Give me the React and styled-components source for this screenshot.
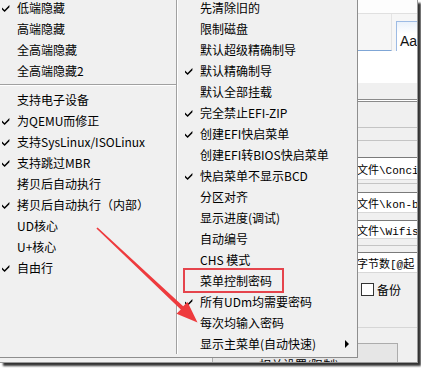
import React from 'react';
import styled, { createGlobalStyle } from 'styled-components';

const Global = createGlobalStyle`
  html, body { margin: 0; padding: 0; background: #fff; }
  body { width: 421px; height: 368px; overflow: hidden; }
`;

const Frame = styled.div`
  position: relative;
  box-sizing: border-box;
  width: 418px;
  height: 363px;
  background: #f0f0f0;
  border-right: 1px solid #9a9a9a;
  border-bottom: 1px solid #9a9a9a;
  box-shadow: 3px 3px 2px rgba(0, 0, 0, 0.8);
  overflow: hidden;
  font-family: "Noto Sans CJK SC", "Noto Sans", sans-serif;
`;

/* ---------- window behind the menu ---------- */

const Window = styled.div`
  display: flex;
  flex-direction: column;
  height: 100%;
`;

const MainArea = styled.div`
  display: flex;
  height: 343px;
`;

const Spacer = styled.div`
  flex: 1;
`;

const SidePanel = styled.div`
  width: 60px;
  display: flex;
  flex-direction: column;
  overflow: hidden;
`;

const Block = styled.div`
  height: ${p => p.$h}px;
  background: ${p => p.$bg || '#f0f0f0'};
  flex-shrink: 0;
`;

const Rule = styled.div`
  height: 1px;
  flex-shrink: 0;
  background: ${p => p.$c || '#a0a0a0'};
`;

const Ribbon = styled.div`
  height: 37px;
  display: flex;
  align-items: flex-end;
  background: #f6f6f6;
`;

const RibbonFill = styled.div`
  flex: 1;
  height: 100%;
  box-sizing: border-box;
  border-bottom: 1px solid #7fa6d6;
  border-right: 1px solid #e4e4e4;
  margin-right: 4px;
`;

const AaTab = styled.div`
  width: 21px;
  height: 30px;
  box-sizing: border-box;
  border: 1px solid #9dbbe4;
  border-bottom: none;
  border-right: none;
  background: linear-gradient(#e9f1fb, #ffffff 40%);
  font-family: "Liberation Sans", sans-serif;
  font-size: 14px;
  line-height: 14px;
  padding: 12px 0 0 3px;
  white-space: nowrap;
  color: #111;
`;

const Field = styled.div`
  height: ${p => p.$h}px;
  box-sizing: border-box;
  flex-shrink: 0;
  background: #fff;
  border-top: 1px solid #7a7a7a;
  border-bottom: 1px solid #d8d8d8;
  display: flex;
  align-items: center;
  white-space: nowrap;
  font-family: "Liberation Mono", "Noto Sans CJK SC", monospace;
  font-size: 11px;
  color: #000;
`;

const CheckRow = styled.div`
  height: 15px;
  flex-shrink: 0;
  display: flex;
  align-items: center;
  gap: 3px;
  padding-left: 4px;
  font-size: 12px;
  color: #000;
  white-space: nowrap;
`;

const Box = styled.span`
  width: 11px;
  height: 11px;
  border: 1px solid #333;
  background: #fff;
`;

const BottomRow = styled.div`
  display: flex;
  padding-left: 212px;
`;

const Button = styled.div`
  width: 186px;
  height: 30px;
  box-sizing: border-box;
  border: 1px solid #acacac;
  background: #e6e6e6;
  font-size: 12px;
  line-height: 12px;
  padding: 15px 0 0 46px;
  color: #000;
  white-space: nowrap;
`;

/* ---------- popup menu ---------- */

const Menu = styled.div`
  position: absolute;
  left: -5px;
  top: -3px;
  display: flex;
  background: #f0f0f0;
  border-right: 1px solid #8e8e8e;
  border-bottom: 1px solid #8e8e8e;
  font-size: 12px;
  color: #000;
`;

const Column = styled.div`
  width: ${p => p.$w}px;
  display: flex;
  flex-direction: column;
  ${p => p.$break ? `
    align-self: stretch;
    margin-bottom: 3px;
    border-right: 1px solid #a0a0a0;
    box-shadow: 1px 0 0 #ffffff;
  ` : `
    padding-bottom: 3px;
    margin-left: 1px;
  `}
`;

const Item = styled.div`
  height: 21px;
  display: flex;
  align-items: center;
  white-space: nowrap;
  position: relative;
`;

const Gutter = styled.span`
  width: ${p => p.$w}px;
  flex-shrink: 0;
  display: flex;
  align-items: center;
  padding-left: ${p => p.$pad}px;
  box-sizing: border-box;
`;

const Label = styled.span`
  flex: 1;
  line-height: 21px;
`;

const SubArrow = styled.span`
  width: 0;
  height: 0;
  border-left: 4px solid #000;
  border-top: 4px solid transparent;
  border-bottom: 4px solid transparent;
  margin-right: 8px;
`;

const Separator = styled.div`
  height: 8px;
  display: flex;
  flex-direction: column;
  justify-content: center;
  padding-left: 3px;
  &::before { content: ''; height: 1px; background: #a0a0a0; }
  &::after { content: ''; height: 1px; background: #ffffff; }
`;

/* ---------- annotations ---------- */

const Highlight = styled.div`
  position: absolute;
  left: 183px;
  top: 268px;
  width: 101px;
  height: 25px;
  box-sizing: border-box;
  border: 2px solid #e5444c;
`;

const Overlay = styled.svg`
  position: absolute;
  left: 0;
  top: 0;
  pointer-events: none;
`;

const Check = () => (
  <svg width="8" height="8" viewBox="0 0 8 8">
    <path d="M0 3.6 L2.6 6 L7.4 1 L7.4 3.2 L2.6 8 L0 5.6 Z" fill="#000" />
  </svg>
);

const leftItems = [
  { t: '低端隐藏', c: true },
  { t: '高端隐藏' },
  { t: '全高端隐藏' },
  { t: '全高端隐藏2' },
  { sep: true },
  { t: '支持电子设备' },
  { t: '为QEMU而修正', c: true },
  { t: '支持SysLinux/ISOLinux', c: true },
  { t: '支持跳过MBR', c: true },
  { t: '拷贝后自动执行' },
  { t: '拷贝后自动执行（内部）', c: true },
  { t: 'UD核心' },
  { t: 'U+核心' },
  { t: '自由行', c: true },
];

const rightItems = [
  { t: '先清除旧的' },
  { t: '限制磁盘' },
  { t: '默认超级精确制导' },
  { t: '默认精确制导', c: true },
  { t: '默认全部挂载' },
  { t: '完全禁止EFI-ZIP', c: true },
  { t: '创建EFI快启菜单', c: true },
  { t: '创建EFI转BIOS快启菜单' },
  { t: '快启菜单不显示BCD', c: true },
  { t: '分区对齐' },
  { t: '显示进度(调试)' },
  { t: '自动编号' },
  { t: 'CHS 模式' },
  { t: '菜单控制密码' },
  { t: '所有UDm均需要密码', c: true },
  { t: '每次均输入密码' },
  { t: '显示主菜单(自动快速)', sub: true },
];

const MenuColumn = ({ items, width, pad, gutter, isBreak }) => (
  <Column $w={width} $break={isBreak}>
    {items.map((it, i) =>
      it.sep ? (
        <Separator key={i} />
      ) : (
        <Item key={i}>
          <Gutter $w={gutter} $pad={pad}>{it.c && <Check />}</Gutter>
          <Label>{it.t}</Label>
          {it.sub && <SubArrow />}
        </Item>
      )
    )}
  </Column>
);

export default function App() {
  return (
    <>
      <Global />
      <Frame>
        <Window>
          <MainArea>
            <Spacer />
            <SidePanel>
              <Block $h={13} $bg="#fdfdfd" />
              <Rule $c="#e0e0e0" />
              <Ribbon>
                <RibbonFill />
                <AaTab>Aa</AaTab>
              </Ribbon>
              <Block $h={32} $bg="#ffffff" />
              <Block $h={16} />
              <Rule $c="#8a8a8a" />
              <Rule $c="#ffffff" />
              <Rule $c="#8a8a8a" />
              <Block $h={25} />
              <Rule $c="#c4c4c4" />
              <Block $h={12} />
              <Rule $c="#c4c4c4" />
              <Block $h={16} />
              <Field $h={23}>文件\Conci</Field>
              <Block $h={3} />
              <Rule $c="#c4c4c4" />
              <Block $h={8} />
              <Field $h={21}>文件\kon-b</Field>
              <Block $h={7} />
              <Field $h={19}>文件\Wifis</Field>
              <Block $h={6} />
              <Rule $c="#c4c4c4" />
              <Block $h={6} />
              <Field $h={21}>字节数[@起</Field>
              <Block $h={9} />
              <CheckRow><Box />备份</CheckRow>
              <Block $h={30} />
              <Rule $c="#d6d6d6" />
              <Block $h={15} />
            </SidePanel>
          </MainArea>
          <BottomRow>
            <Button>相关设置(限制)</Button>
          </BottomRow>
        </Window>

        <Menu>
          <MenuColumn items={leftItems} width={181} gutter={22} pad={7} isBreak />
          <MenuColumn items={rightItems} width={179} gutter={22} pad={7} />
        </Menu>

        <Highlight />
        <Overlay width="421" height="368" viewBox="0 0 421 368">
          <polygon
            points="97.6,227.4 183.2,306.2 187.5,302.1 197.5,322.5 176.5,313.7 180.8,309.6 96.4,228.6"
            fill="#ee3b3e"
          />
        </Overlay>
      </Frame>
    </>
  );
}
